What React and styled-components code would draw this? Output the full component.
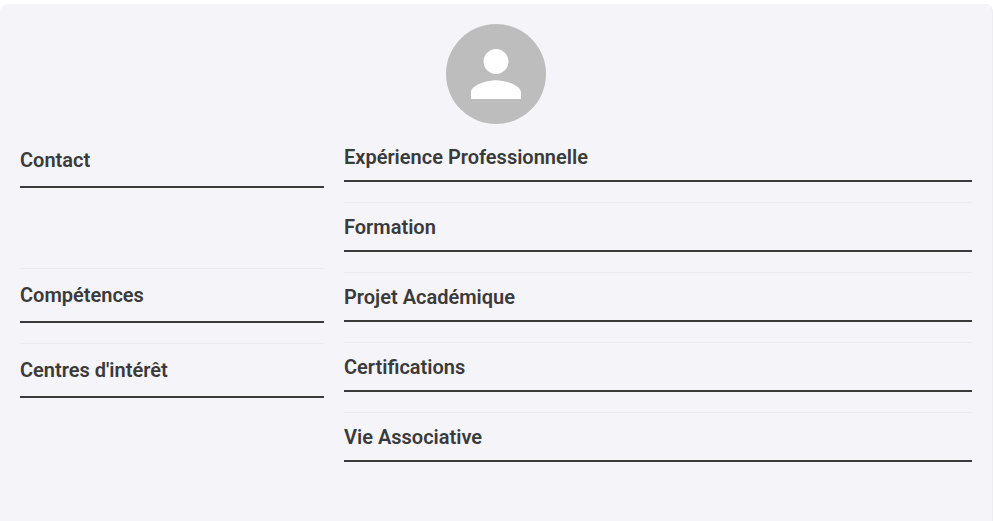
import React from "react";
import styled, { createGlobalStyle } from "styled-components";

const GlobalStyle = createGlobalStyle`
  *, *::before, *::after { box-sizing: border-box; }
  body {
    margin: 0;
    background: #fff;
    color: #3a3a3a;
    font-family: Roboto, "Liberation Sans", sans-serif;
  }
`;

const Page = styled.main`
  min-height: calc(100vh - 4px);
  margin-top: 4px;
  padding: 20px;
  background: #f4f4f9;
  border-right: 1px solid #ececf1;
  border-radius: 8px 8px 0 0;
`;

const Header = styled.header`
  display: flex;
  justify-content: center;
`;

const Avatar = styled.div`
  width: 100px;
  height: 100px;
  border-radius: 50%;
  overflow: hidden;
  background: #bdbdbd;
  color: #fff;
`;

const PersonIcon = styled.svg`
  display: block;
  width: 100%;
  height: 100%;
  fill: currentColor;
`;

const Columns = styled.div`
  display: grid;
  grid-template-columns: minmax(0, 304fr) minmax(0, 628fr);
  gap: 20px;
  padding-top: 15px;
`;

const Sidebar = styled.aside`
  padding-top: 3px;
`;

const Content = styled.div``;

const Section = styled.section`
  padding-top: ${(p) => (p.$first ? 0 : p.$roomy ? 8 : 6)}px;
  padding-bottom: ${(p) => (p.$tall ? 80 : 20)}px;
  border-top: ${(p) => (p.$first ? "none" : "1px solid #ececf1")};
`;

const Title = styled.h2`
  margin: 0;
  padding: ${(p) => (p.$roomy ? "4px 0 12px" : "4px 0 9px")};
  border-bottom: 2px solid #3a3a3a;
  font-size: 20px;
  line-height: 28px;
  font-weight: 600;
`;

const sideSections = [
  { title: "Contact", tall: true },
  { title: "Compétences" },
  { title: "Centres d'intérêt" },
];

const mainSections = [
  "Expérience Professionnelle",
  "Formation",
  "Projet Académique",
  "Certifications",
  "Vie Associative",
];

export default function App() {
  return (
    <>
      <GlobalStyle />
      <Page>
        <Header>
          <Avatar role="img" aria-label="Avatar">
            <PersonIcon viewBox="-4 -4 32 32" aria-hidden="true">
              <path d="M12 12c2.21 0 4-1.79 4-4s-1.79-4-4-4-4 1.79-4 4 1.79 4 4 4zm0 2c-2.67 0-8 1.34-8 4v2h16v-2c0-2.66-5.33-4-8-4z" />
            </PersonIcon>
          </Avatar>
        </Header>
        <Columns>
          <Sidebar>
            {sideSections.map((s, i) => (
              <Section key={s.title} $first={i === 0} $tall={s.tall} $roomy>
                <Title $roomy>{s.title}</Title>
              </Section>
            ))}
          </Sidebar>
          <Content>
            {mainSections.map((title, i) => (
              <Section key={title} $first={i === 0}>
                <Title>{title}</Title>
              </Section>
            ))}
          </Content>
        </Columns>
      </Page>
    </>
  );
}
